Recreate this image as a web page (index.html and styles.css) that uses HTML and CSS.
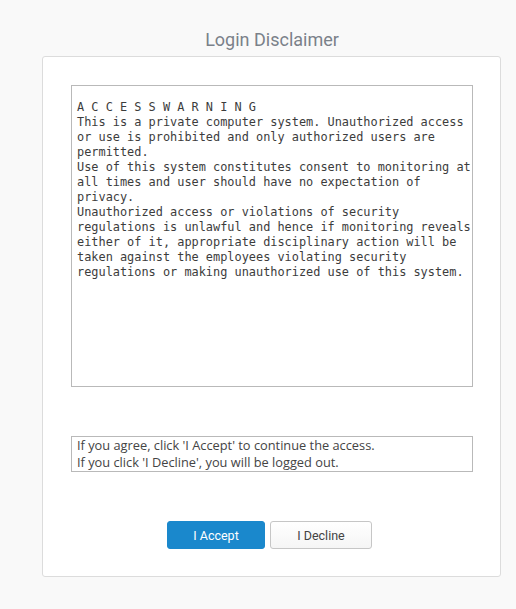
FILE: index.html
```html
<!DOCTYPE html>
<html>
<head>
<meta charset="utf-8">
<link rel="stylesheet" href="styles.css">
</head>
<body>
<div class="page">
  <h1 class="title">Login Disclaimer</h1>
  <div class="card">
    <div class="disclaimer">A C C E S S W A R N I N G
This is a private computer system. Unauthorized access
or use is prohibited and only authorized users are
permitted.
Use of this system constitutes consent to monitoring at
all times and user should have no expectation of
privacy.
Unauthorized access or violations of security
regulations is unlawful and hence if monitoring reveals
either of it, appropriate disciplinary action will be
taken against the employees violating security
regulations or making unauthorized use of this system.</div>
    <div class="notice">
      <div>If you agree, click 'I Accept' to continue the access.</div>
      <div>If you click 'I Decline', you will be logged out.</div>
    </div>
    <div class="actions">
      <button class="btn btn-primary">I Accept</button>
      <button class="btn btn-default">I Decline</button>
    </div>
  </div>
</div>
</body>
</html>
```
FILE: styles.css
```css
html, body {
  margin: 0;
  padding: 0;
  background: #f9f9f9;
  font-family: Roboto, "Liberation Sans", sans-serif;
}
.page {
  padding-top: 29px;
}
.title {
  margin: 0 0 5px 0;
  font-size: 18px;
  line-height: 22px;
  font-weight: 400;
  color: #7b8189;
  text-align: center;
  padding-left: 28px;
}
.card {
  margin-left: 42px;
  width: 402px;
  background: #fff;
  border: 1px solid #dcdcdc;
  border-radius: 3px;
  padding: 28px 27px 27px 28px;
}
.disclaimer {
  box-sizing: border-box;
  width: 402px;
  height: 302px;
  border: 1px solid #b9b9b9;
  padding: 14px 5px 0 5px;
  font-family: "DejaVu Sans Mono", "Liberation Mono", monospace;
  font-size: 11.9px;
  line-height: 15px;
  color: #3c3c3c;
  white-space: pre;
  overflow: hidden;
}
.notice {
  box-sizing: border-box;
  width: 402px;
  margin-top: 49px;
  height: 36px;
  border: 1px solid #b9b9b9;
  padding: 0 5px;
  font-family: "Open Sans", Roboto, sans-serif;
  font-size: 12.8px;
  line-height: 17px;
  color: #444;
}
.actions {
  margin-top: 49px;
  display: flex;
  justify-content: center;
  gap: 5px;
  padding-right: 5px;
}
.btn {
  box-sizing: border-box;
  height: 28px;
  border-radius: 3px;
  font-family: Roboto, "Liberation Sans", sans-serif;
  font-size: 12.5px;
  padding: 0;
}
.btn-primary {
  width: 98px;
  background: #1a88cc;
  border: 1px solid #1a88cc;
  color: #fff;
}
.btn-default {
  width: 102px;
  background: linear-gradient(#ffffff, #f5f5f5);
  border: 1px solid #c6c6c6;
  color: #444;
}
```
